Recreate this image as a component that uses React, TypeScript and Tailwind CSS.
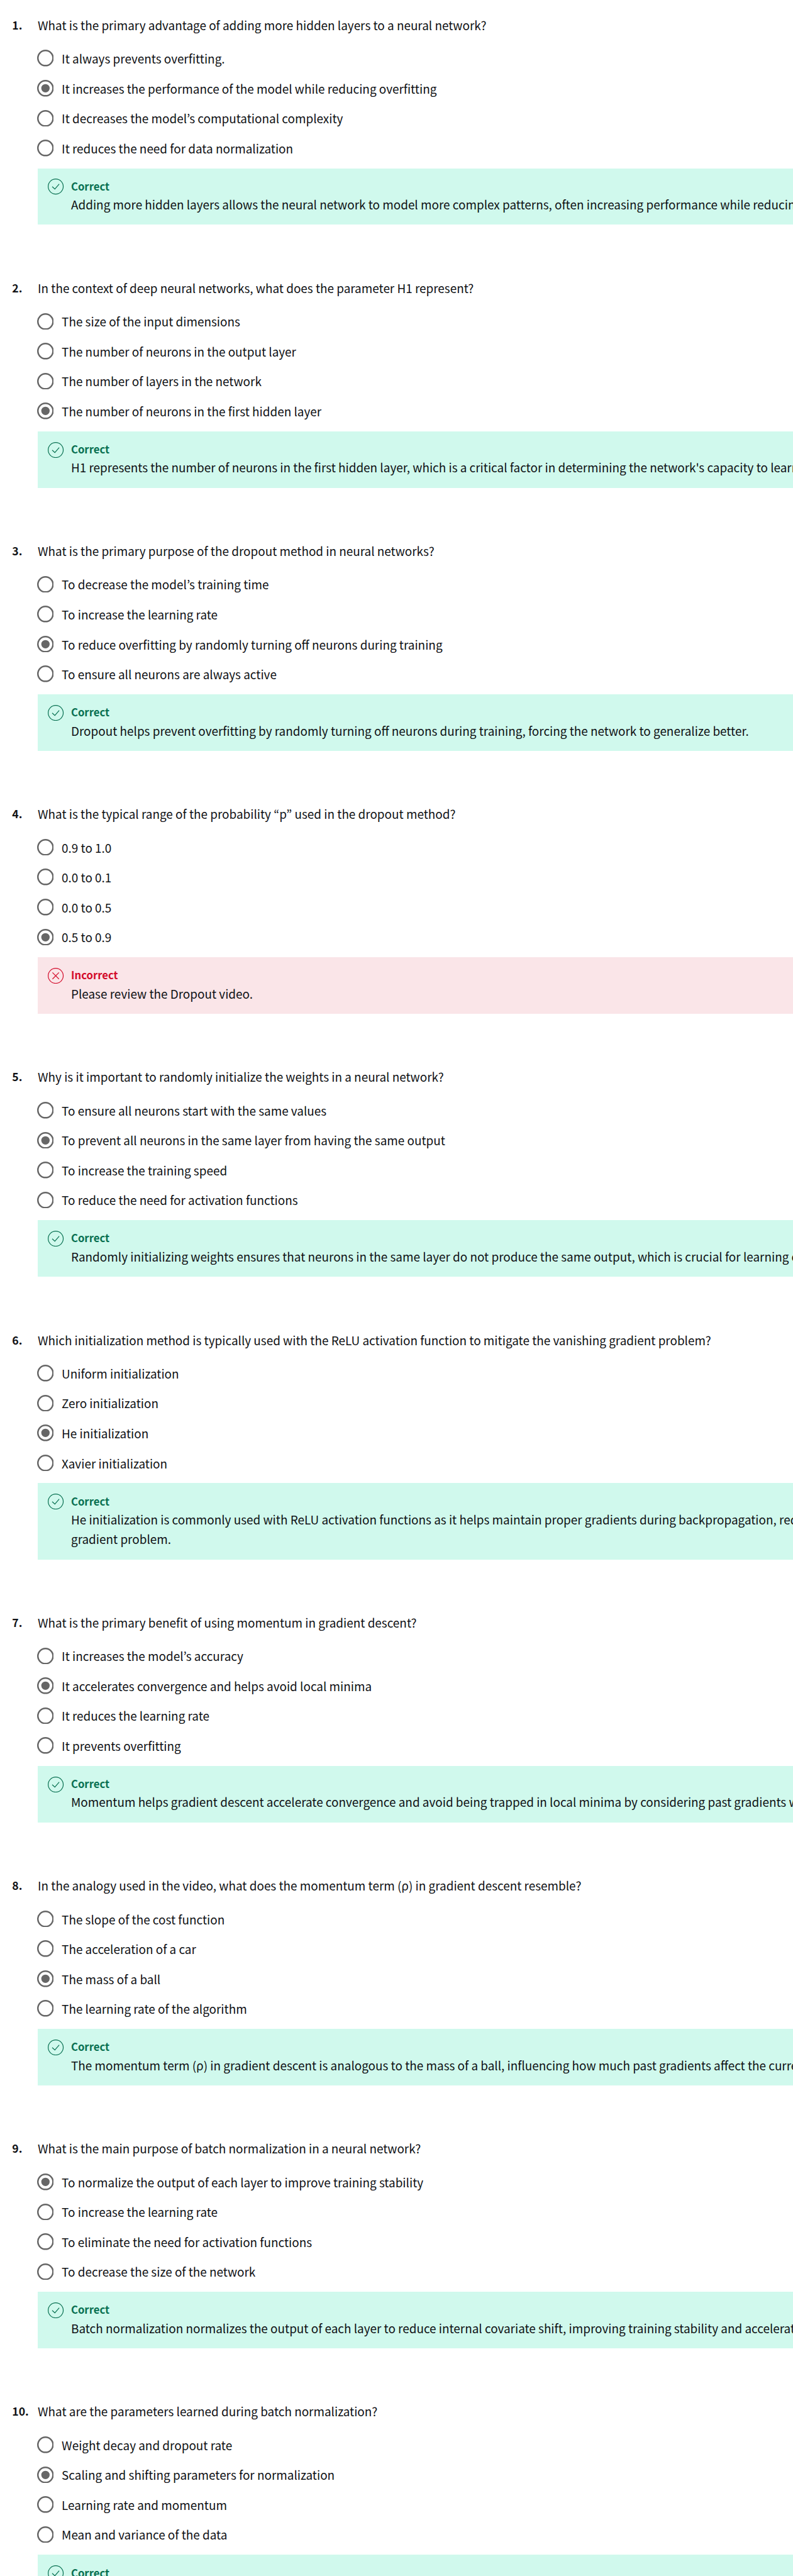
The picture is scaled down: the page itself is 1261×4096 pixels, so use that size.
type Question = {
  prompt: string;
  options: string[];
  selected: number;
  correct?: boolean;
  feedback: string[];
};

const questions: Question[] = [
  {
    prompt: "What is the primary advantage of adding more hidden layers to a neural network?",
    options: [
      "It always prevents overfitting.",
      "It increases the performance of the model while reducing overfitting",
      "It decreases the model’s computational complexity",
      "It reduces the need for data normalization",
    ],
    selected: 1,
    feedback: [
      "Adding more hidden layers allows the neural network to model more complex patterns, often increasing performance while reducing",
    ],
  },
  {
    prompt: "In the context of deep neural networks, what does the parameter H1 represent?",
    options: [
      "The size of the input dimensions",
      "The number of neurons in the output layer",
      "The number of layers in the network",
      "The number of neurons in the first hidden layer",
    ],
    selected: 3,
    feedback: [
      "H1 represents the number of neurons in the first hidden layer, which is a critical factor in determining the network's capacity to learn",
    ],
  },
  {
    prompt: "What is the primary purpose of the dropout method in neural networks?",
    options: [
      "To decrease the model’s training time",
      "To increase the learning rate",
      "To reduce overfitting by randomly turning off neurons during training",
      "To ensure all neurons are always active",
    ],
    selected: 2,
    feedback: [
      "Dropout helps prevent overfitting by randomly turning off neurons during training, forcing the network to generalize better.",
    ],
  },
  {
    prompt: "What is the typical range of the probability “p” used in the dropout method?",
    options: ["0.9 to 1.0", "0.0 to 0.1", "0.0 to 0.5", "0.5 to 0.9"],
    selected: 3,
    correct: false,
    feedback: ["Please review the Dropout video."],
  },
  {
    prompt: "Why is it important to randomly initialize the weights in a neural network?",
    options: [
      "To ensure all neurons start with the same values",
      "To prevent all neurons in the same layer from having the same output",
      "To increase the training speed",
      "To reduce the need for activation functions",
    ],
    selected: 1,
    feedback: [
      "Randomly initializing weights ensures that neurons in the same layer do not produce the same output, which is crucial for learning effectively",
    ],
  },
  {
    prompt:
      "Which initialization method is typically used with the ReLU activation function to mitigate the vanishing gradient problem?",
    options: ["Uniform initialization", "Zero initialization", "He initialization", "Xavier initialization"],
    selected: 2,
    feedback: [
      "He initialization is commonly used with ReLU activation functions as it helps maintain proper gradients during backpropagation, reducing",
      "gradient problem.",
    ],
  },
  {
    prompt: "What is the primary benefit of using momentum in gradient descent?",
    options: [
      "It increases the model’s accuracy",
      "It accelerates convergence and helps avoid local minima",
      "It reduces the learning rate",
      "It prevents overfitting",
    ],
    selected: 1,
    feedback: [
      "Momentum helps gradient descent accelerate convergence and avoid being trapped in local minima by considering past gradients when",
    ],
  },
  {
    prompt: "In the analogy used in the video, what does the momentum term (ρ) in gradient descent resemble?",
    options: [
      "The slope of the cost function",
      "The acceleration of a car",
      "The mass of a ball",
      "The learning rate of the algorithm",
    ],
    selected: 2,
    feedback: [
      "The momentum term (ρ) in gradient descent is analogous to the mass of a ball, influencing how much past gradients affect the current",
    ],
  },
  {
    prompt: "What is the main purpose of batch normalization in a neural network?",
    options: [
      "To normalize the output of each layer to improve training stability",
      "To increase the learning rate",
      "To eliminate the need for activation functions",
      "To decrease the size of the network",
    ],
    selected: 0,
    feedback: [
      "Batch normalization normalizes the output of each layer to reduce internal covariate shift, improving training stability and accelerating",
    ],
  },
  {
    prompt: "What are the parameters learned during batch normalization?",
    options: [
      "Weight decay and dropout rate",
      "Scaling and shifting parameters for normalization",
      "Learning rate and momentum",
      "Mean and variance of the data",
    ],
    selected: 1,
    feedback: [""],
  },
];

function Radio({ checked }: { checked: boolean }) {
  return (
    <svg viewBox="0 0 28 28" className="size-[26.6px] shrink-0" fill="none">
      <circle cx="14" cy="14" r="12.7" stroke="#666666" strokeWidth="2.6" />
      {checked && <circle cx="14" cy="14" r="7" fill="#666666" />}
    </svg>
  );
}

function StatusIcon({ correct }: { correct: boolean }) {
  return (
    <svg
      viewBox="0 0 20 20"
      className="mt-[0.6px] size-[25.2px] shrink-0"
      fill="none"
      stroke="currentColor"
      strokeWidth="0.95"
    >
      <circle cx="10" cy="10" r="9.5" />
      {correct ? <path d="M5.6 10.1l3.3 3.2 5.5-6.4" /> : <path d="M5.9 5.9l8.2 8.2M14.1 5.9l-8.2 8.2" />}
    </svg>
  );
}

function Feedback({ correct, lines }: { correct: boolean; lines: string[] }) {
  return (
    <div
      className={`mt-[8.5px] flex pt-[16.2px] pb-[16.8px] pl-[16.8px] ${
        correct ? "bg-[#d0f9ed] text-[#087051]" : "bg-[#fae5e8] text-[#d30b2a]"
      }`}
    >
      <StatusIcon correct={correct} />
      <div className="ml-[11.4px]">
        <p className="mb-[1.4px] text-[16.7px] leading-[24px] font-bold">{correct ? "Correct" : "Incorrect"}</p>
        {lines.map((line, i) => (
          <p key={i} className="h-[31.4px] leading-[32.4px] text-[#0f1114]">
            {line}
          </p>
        ))}
      </div>
    </div>
  );
}

export default function App() {
  return (
    <main className="h-[4096px] w-[1261px] overflow-hidden bg-white pt-[23.8px] pl-[19.3px] font-['Noto_Sans_CJK_KR','Noto_Sans',sans-serif] text-[18.92px] whitespace-nowrap text-[#0f1114]">
      {questions.map((q, n) => (
        <section key={n} className="flex pb-[84.5px]">
          <span className="w-[40.3px] shrink-0 text-[17.6px] leading-[32.4px] font-semibold">{n + 1}.</span>
          <div className="min-w-0 flex-1">
            <h2 className="h-[31.4px] pl-[0.4px] leading-[32.4px]">{q.prompt}</h2>
            <ul className="mt-[13.8px]">
              {q.options.map((option, i) => (
                <li key={option} className="-ml-[1.1px] flex h-[47.55px] items-center gap-[13px]">
                  <Radio checked={i === q.selected} />
                  <span className="pt-[1.2px]">{option}</span>
                </li>
              ))}
            </ul>
            <Feedback correct={q.correct !== false} lines={q.feedback} />
          </div>
        </section>
      ))}
    </main>
  );
}
